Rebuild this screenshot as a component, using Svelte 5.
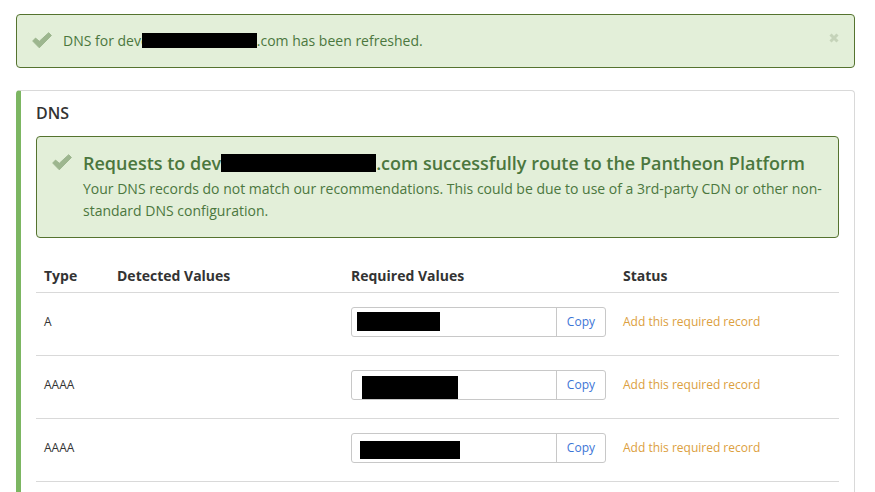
<script lang="ts">
	type Mask = {
		left: number;
		top: number;
		width: number;
		height: number;
	};

	type DnsRecord = {
		id: string;
		type: string;
		detected: string;
		status: string;
		mask: Mask;
	};

	const records: DnsRecord[] = [
		{
			id: 'a-1',
			type: 'A',
			detected: '',
			status: 'Add this required record',
			mask: { left: 5, top: 4, width: 83, height: 19 }
		},
		{
			id: 'aaaa-1',
			type: 'AAAA',
			detected: '',
			status: 'Add this required record',
			mask: { left: 10, top: 5, width: 96, height: 23 }
		},
		{
			id: 'aaaa-2',
			type: 'AAAA',
			detected: '',
			status: 'Add this required record',
			mask: { left: 8, top: 7, width: 100, height: 18 }
		}
	];

	let showNotice = $state(true);

	function maskStyle(mask: Mask): string {
		return `left: ${mask.left}px; top: ${mask.top}px; width: ${mask.width}px; height: ${mask.height}px`;
	}

	function copyValue(id: string) {
		const field = document.getElementById(id) as HTMLInputElement | null;
		if (field) navigator.clipboard?.writeText(field.value);
	}
</script>

{#snippet check()}
	<svg class="check" viewBox="0 0 20 17" aria-hidden="true">
		<path d="M0.7 9 3.5 6.1 7.3 9.3 16.7 0.7 19.4 3.5 7.3 15.8Z" />
	</svg>
{/snippet}

<main class="page">
	{#if showNotice}
		<div class="alert" role="status">
			{@render check()}
			<p>DNS for deve<span class="mask mask-notice"></span>.com has been refreshed.</p>
			<button class="close" type="button" aria-label="Close" onclick={() => (showNotice = false)}>
				<svg viewBox="0 0 10 10" aria-hidden="true">
					<path d="M1.5 1.5 8.5 8.5M8.5 1.5 1.5 8.5" />
				</svg>
			</button>
		</div>
	{/if}

	<section class="panel">
		<h2>DNS</h2>

		<div class="alert">
			{@render check()}
			<div>
				<h3>
					Requests to dev<span class="mask mask-heading"></span>.com successfully route to the Pantheon
					Platform
				</h3>
				<p>
					Your DNS records do not match our recommendations. This could be due to use of a 3rd-party
					CDN or other non-standard DNS configuration.
				</p>
			</div>
		</div>

		<table>
			<thead>
				<tr>
					<th class="col-type" scope="col">Type</th>
					<th scope="col">Detected Values</th>
					<th class="col-required" scope="col">Required Values</th>
					<th class="col-status" scope="col">Status</th>
				</tr>
			</thead>
			<tbody>
				{#each records as record (record.id)}
					<tr>
						<td>{record.type}</td>
						<td>{record.detected}</td>
						<td>
							<div class="copy-field">
								<input id={record.id} type="text" readonly aria-label="Required value" />
								<span class="value-mask" style={maskStyle(record.mask)}></span>
								<button type="button" onclick={() => copyValue(record.id)}>Copy</button>
							</div>
						</td>
						<td class="status">{record.status}</td>
					</tr>
				{/each}
			</tbody>
		</table>
	</section>
</main>

<style>
	:global(body) {
		background: #fff;
	}

	.page {
		box-sizing: border-box;
		display: flex;
		flex-direction: column;
		gap: 22px;
		min-height: 100vh;
		padding: 14px 20px 0 16px;
		color: #333;
		font-family: 'Open Sans', 'Noto Sans', sans-serif;
		font-size: 14px;
		line-height: 22px;
	}

	h2,
	h3,
	p {
		margin: 0;
	}

	.alert {
		display: flex;
		align-items: flex-start;
		gap: 11px;
		padding: 15px;
		border: 1px solid #55732f;
		border-radius: 4px;
		background: #e3efd9;
		color: #4b773e;
	}

	.check {
		flex: none;
		width: 20px;
		height: 17px;
		margin-top: 2px;
		fill: #9db68f;
		stroke: #9db68f;
		stroke-linejoin: round;
	}

	.mask {
		display: inline-block;
		background: #000;
	}

	.mask-notice {
		width: 115px;
		height: 15px;
		margin-left: -7px;
		vertical-align: -2px;
	}

	.mask-heading {
		width: 155px;
		height: 18px;
		vertical-align: -2px;
	}

	.close {
		display: flex;
		margin-left: auto;
		padding: 3px 0;
		border: 0;
		background: none;
		cursor: pointer;
	}

	.close svg {
		width: 10px;
		height: 10px;
		fill: none;
		stroke: #c5d3b9;
		stroke-width: 3;
	}

	.panel {
		flex: 1;
		padding: 11px 15px 0;
		border: 1px solid #d9d9d9;
		border-bottom: 0;
		border-left: 5px solid #7cb662;
		border-radius: 4px 4px 0 0;
	}

	h2 {
		margin-bottom: 12px;
		font-size: 16px;
		font-weight: 600;
	}

	h3 {
		margin-bottom: 4px;
		font-size: 18px;
		font-weight: 600;
	}

	table {
		width: 100%;
		margin-top: 22px;
		border-collapse: separate;
		border-spacing: 0;
		table-layout: fixed;
	}

	th {
		padding: 5px 8px;
		border-bottom: 1px solid #d9d9d9;
		font-weight: 700;
		text-align: left;
	}

	td {
		padding: 14px 8px 18px;
		border-bottom: 1px solid #d9d9d9;
		font-size: 12px;
	}

	.col-type {
		width: 57px;
	}

	.col-required {
		width: 256px;
	}

	.col-status {
		width: 208px;
	}

	.status {
		color: #dca040;
	}

	.copy-field {
		position: relative;
		display: flex;
		box-sizing: border-box;
		height: 30px;
		margin-right: 1px;
		border: 1px solid #c8c8c8;
		border-radius: 3px;
	}

	.copy-field input {
		flex: 1;
		min-width: 0;
		padding: 0 8px;
		border: 0;
		background: none;
		font: inherit;
	}

	.copy-field button {
		padding: 0 10px;
		border: 0;
		border-left: 1px solid #c8c8c8;
		background: none;
		color: #3c75d6;
		font: inherit;
		cursor: pointer;
	}

	.value-mask {
		position: absolute;
		background: #000;
	}
</style>
